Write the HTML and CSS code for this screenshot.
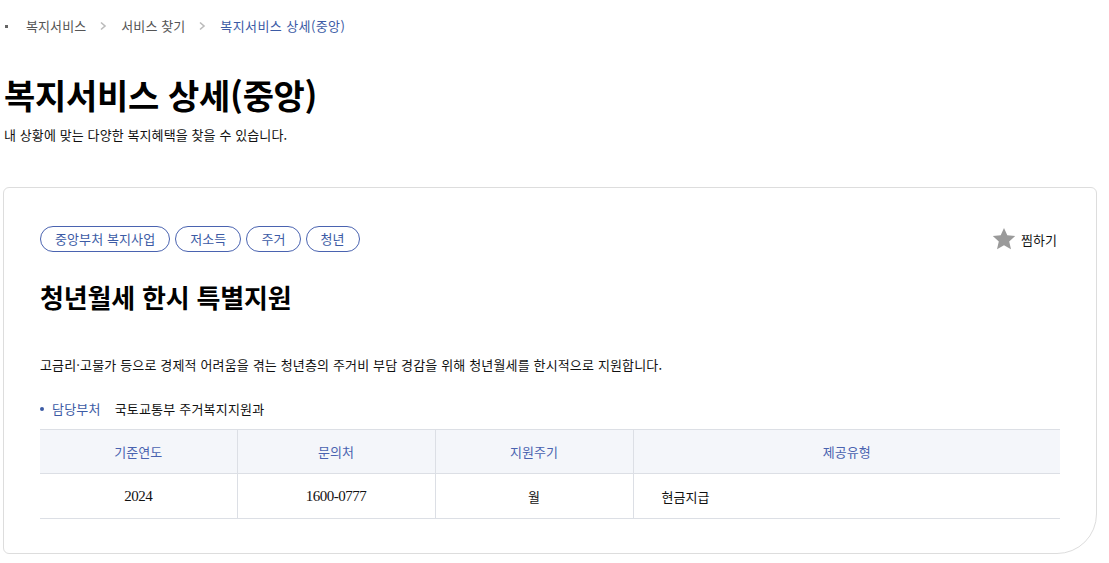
FILE: index.html
```html
<!DOCTYPE html>
<html lang="ko">
<head>
<meta charset="utf-8">
<link rel="stylesheet" href="styles.css">
</head>
<body>
<nav class="crumbs">
  <span class="crumb-dot"></span>
  <span class="crumb">복지서비스</span>
  <span class="sep"><svg width="8" height="10" viewBox="0 0 8 10"><path d="M2 1.5l4 3.5-4 3.5" fill="none" stroke="#bbb" stroke-width="1.6"/></svg></span>
  <span class="crumb">서비스 찾기</span>
  <span class="sep"><svg width="8" height="10" viewBox="0 0 8 10"><path d="M2 1.5l4 3.5-4 3.5" fill="none" stroke="#bbb" stroke-width="1.6"/></svg></span>
  <span class="crumb current">복지서비스 상세(중앙)</span>
</nav>
<header class="page-head">
  <h1 class="page-title">복지서비스 상세(중앙)</h1>
  <p class="page-sub">내 상황에 맞는 다양한 복지혜택을 찾을 수 있습니다.</p>
</header>
<section class="card">
  <div class="card-top">
    <ul class="tags">
      <li class="tag">중앙부처 복지사업</li>
      <li class="tag">저소득</li>
      <li class="tag">주거</li>
      <li class="tag">청년</li>
    </ul>
    <button class="fav">
      <svg width="24" height="24" viewBox="0 0 24 24"><path d="M12 1l3.3 7.3 7.9.8-6 5.3 1.8 7.8L12 18.2l-7 4 1.8-7.8-6-5.3 7.9-.8z" fill="#9a9a9a"/></svg>
      <span>찜하기</span>
    </button>
  </div>
  <h2 class="card-title">청년월세 한시 특별지원</h2>
  <p class="desc">고금리·고물가 등으로 경제적 어려움을 겪는 청년층의 주거비 부담 경감을 위해 청년월세를 한시적으로 지원합니다.</p>
  <p class="dept"><span class="dept-label">담당부처</span><span class="dept-value">국토교통부 주거복지지원과</span></p>
  <table class="info">
    <thead>
      <tr><th>기준연도</th><th>문의처</th><th>지원주기</th><th>제공유형</th></tr>
    </thead>
    <tbody>
      <tr><td class="num">2024</td><td class="num">1600-0777</td><td>월</td><td class="left">현금지급</td></tr>
    </tbody>
  </table>
</section>
</body>
</html>
```
FILE: styles.css
```css
* { box-sizing: border-box; }
body {
  margin: 0;
  background: #fff;
  color: #111;
  font-family: "Noto Sans CJK KR", "Noto Sans", sans-serif;
}
.crumbs {
  display: flex;
  align-items: center;
  height: 20px;
  margin-top: 16px;
  padding-left: 5px;
  font-size: 13px;
  line-height: 20px;
  color: #555;
  letter-spacing: 0.1px;
}
.crumb-dot {
  width: 3px;
  height: 3px;
  background: #666;
  margin-right: 18px;
}
.sep {
  display: flex;
  align-items: center;
  margin: 0 14px 0 13px;
}
.crumb.current { color: #3c5ba5; letter-spacing: 0.4px; }
.page-head { padding-left: 4px; }
.page-title {
  margin: 38px 0 0;
  font-size: 34px;
  line-height: 42px;
  font-weight: 700;
  letter-spacing: -0.3px;
  color: #000;
}
.page-sub {
  margin: 10px 0 0;
  font-size: 13px;
  line-height: 18px;
  letter-spacing: 0.1px;
  color: #111;
}
.card {
  margin: 43px 12px 0 3px;
  height: 367px;
  border: 1px solid #ddd;
  border-radius: 6px 6px 40px 6px;
  padding: 38px 36px 0 36px;
}
.card-top {
  display: flex;
  justify-content: space-between;
  align-items: center;
}
.tags {
  display: flex;
  gap: 5px;
  margin: 0;
  padding: 0;
  list-style: none;
}
.tag {
  height: 26px;
  padding: 0 14px;
  border: 1px solid #4a63b0;
  border-radius: 13px;
  font-size: 13px;
  line-height: 24px;
  color: #3c5ba5;
  letter-spacing: 0.1px;
}
.fav {
  display: flex;
  align-items: center;
  gap: 5px;
  border: 0;
  background: none;
  padding: 0;
  margin-right: 3px;
  font-family: inherit;
  font-size: 13px;
  color: #111;
  letter-spacing: 0;
}
.card-title {
  margin: 28px 0 0;
  font-size: 26px;
  line-height: 34px;
  font-weight: 700;
  letter-spacing: -0.2px;
  color: #000;
}
.desc {
  margin: 41px 0 0;
  font-size: 13px;
  line-height: 20px;
  letter-spacing: 0.15px;
}
.dept {
  margin: 24px 0 0;
  font-size: 13px;
  line-height: 20px;
  letter-spacing: 0.2px;
  display: flex;
  align-items: center;
}
.dept-label {
  color: #3c5ba5;
  display: flex;
  align-items: center;
  margin-right: 14px;
}
.dept-label::before {
  content: "";
  width: 4px;
  height: 4px;
  border-radius: 50%;
  background: #3c5ba5;
  margin-right: 8px;
}
.info {
  margin-top: 10px;
  width: 100%;
  border-collapse: collapse;
  border-top: 1px solid #dcdfe5;
  border-bottom: 1px solid #dcdfe5;
  table-layout: fixed;
  font-size: 13px;
  letter-spacing: 0;
}
.info th {
  height: 44px;
  background: #f4f6fa;
  color: #4a63b0;
  font-weight: 400;
  border-bottom: 1px solid #dcdfe5;
  width: 198px;
}
.info th:first-child { width: 197px; }
.info th:last-child { width: auto; }
.info th + th, .info td + td { border-left: 1px solid #dcdfe5; }
.info td {
  height: 45px;
  text-align: center;
  color: #111;
}
.info td.num {
  font-family: "Liberation Serif", serif;
  font-size: 15px;
  letter-spacing: -0.5px;
}
.info td.left {
  text-align: left;
  padding-left: 28px;
}
```
